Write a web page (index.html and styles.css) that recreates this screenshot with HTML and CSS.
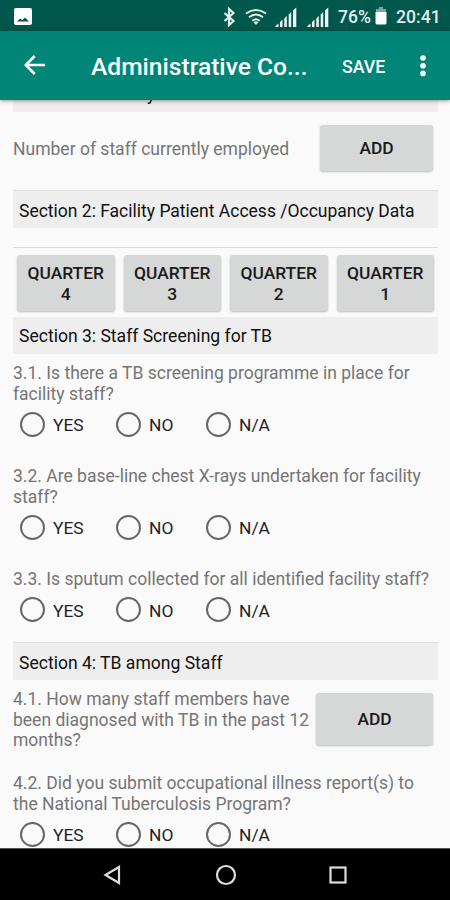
FILE: index.html
```html
<!DOCTYPE html>
<html lang="en">
<head>
<meta charset="utf-8">
<title>Administrative Controls</title>
<link rel="stylesheet" href="styles.css">
</head>
<body>
<div class="screen">
  <div class="status">
    <svg class="status-photo" width="18" height="18" viewBox="0 0 18 18"><rect width="18" height="17" rx="2" fill="#fff"/><path d="M3 13.500l3.200-3 2 1.800L11 9.500l4 4z" fill="#00574b"/></svg>
    <svg class="status-icons" width="112" height="24" viewBox="0 0 112 24" fill="none">
      <path d="M4.500 8l9 8L9 20V4l4.500 4-9 8" stroke="#e2eeec" stroke-width="2.200"/>
      <g stroke="#e2eeec" stroke-width="2"><path d="M26 8.500q10-7 20 0M29 12.200q7-5.500 14 0M32.300 15.700q3.700-3 7.400 0"/></g>
      <path d="M33.500 17l2.500 3 2.500-3q-2.500-1.500-5 0z" fill="#e2eeec"/>
      <g id="signal" fill="#f0f6f5"><path d="M55.500 22v-1l3-2.500V22zM60 22v-5l2.500-2.500V22zM64.300 22v-8.500l2.500-2.500v11zM68.700 22V9.500l2.500-2.500v15zM73 22V5.500L76.300 2.500V22z"/></g>
      <use href="#signal" x="32"/>
    </svg>
    <span class="status-text percent">76%</span>
    <svg class="battery" width="12" height="20" viewBox="0 0 12 20"><path d="M4 1h4v2h3v4H1V3h3z" fill="#7aa7a0"/><path d="M.5 6h11v11q0 1.500-1.500 1.500H2Q.5 18.500.5 17z" fill="#fff"/></svg>
    <span class="status-text clock">20:41</span>
  </div>
  <header class="appbar">
    <svg class="back" width="22" height="20" viewBox="0 0 22 20" fill="none" stroke="#fff" stroke-width="2.600"><path d="M21 10H2M10.700 1L1.800 10l8.900 9"/></svg>
    <h1 class="title">Administrative Co...</h1>
    <span class="save">SAVE</span>
    <svg class="more" width="6" height="22" viewBox="0 0 6 22" fill="#fff"><circle cx="3" cy="3" r="2.800"/><circle cx="3" cy="10.700" r="2.800"/><circle cx="3" cy="18.400" r="2.800"/></svg>
  </header>
  <main class="content">
    <h2 class="section first">Section 1: Facility Staff Details</h2>
    <div class="entry staff-count"><p class="question">Number of staff currently employed</p><button class="btn add">ADD</button></div>
    <h2 class="section second">Section 2: Facility Patient Access /Occupancy Data</h2>
    <div class="quarters">
      <button class="btn">QUARTER<br>4</button><button class="btn">QUARTER<br>3</button><button class="btn">QUARTER<br>2</button><button class="btn">QUARTER<br>1</button>
    </div>
    <h2 class="section third">Section 3: Staff Screening for TB</h2>
    <div class="item">
      <p class="question">3.1. Is there a TB screening programme in place for<br>facility staff?</p>
      <div class="radios"><label><i></i>YES</label><label><i></i>NO</label><label><i></i>N/A</label></div>
    </div>
    <div class="item">
      <p class="question">3.2. Are base-line chest X-rays undertaken for facility<br>staff?</p>
      <div class="radios"><label><i></i>YES</label><label><i></i>NO</label><label><i></i>N/A</label></div>
    </div>
    <div class="item short">
      <p class="question">3.3. Is sputum collected for all identified facility staff?</p>
      <div class="radios"><label><i></i>YES</label><label><i></i>NO</label><label><i></i>N/A</label></div>
    </div>
    <h2 class="section">Section 4: TB among Staff</h2>
    <div class="entry diagnosed"><p class="question">4.1. How many staff members have<br>been diagnosed with TB in the past 12<br>months?</p><button class="btn add">ADD</button></div>
    <div class="item">
      <p class="question">4.2. Did you submit occupational illness report(s) to<br>the National Tuberculosis Program?</p>
      <div class="radios"><label><i></i>YES</label><label><i></i>NO</label><label><i></i>N/A</label></div>
    </div>
  </main>
  <nav class="navbar">
    <svg width="20" height="20" viewBox="0 0 20 20"><path d="M16 2v16L2.500 10z"/></svg>
    <svg width="22" height="22" viewBox="0 0 22 22"><circle cx="11" cy="11" r="9"/></svg>
    <svg width="20" height="20" viewBox="0 0 20 20"><rect x="2.500" y="2.500" width="15" height="15"/></svg>
  </nav>
</div>
</body>
</html>
```

FILE: styles.css
```css
* { box-sizing: border-box; }
body { margin: 0; font-family: Roboto, sans-serif; background: #fafafa; }
h1, h2, p { margin: 0; font-weight: 400; }

.screen { width: 450px; height: 900px; display: flex; flex-direction: column; overflow: hidden; }

.status { flex: none; height: 31px; background: #00574b; display: flex; align-items: center; padding: 0 0 0 14px; }
.status-photo { margin-top: 2px; }
.status-icons { margin: 2px 0 0 188px; }
.status-text { color: #e2eeec; font-size: 17.600px; font-weight: 500; line-height: 20px; margin-top: 3px; white-space: nowrap; }
.percent { width: 33px; margin-left: 6px; }
.battery { margin: 1px 9px 0 4px; }
.clock { margin-left: 0; }

.appbar { flex: none; height: 69px; background: #008577; color: #fff; display: flex; align-items: center; padding: 3px 24px 0 24px; position: relative; z-index: 1; box-shadow: 0 1px 4px rgba(0, 0, 0, .4); }
.back { margin-top: -4px; }
.title { font-size: 24.600px; font-weight: 500; line-height: 30px; margin-left: 45px; width: 251px; white-space: nowrap; }
.save { font-size: 17.800px; font-weight: 500; line-height: 22px; width: 78px; white-space: nowrap; }
.more { margin-top: -3px; }

.content { flex: 1; min-height: 0; overflow: hidden; padding: 0 12px 0 13px; }
.section { height: 38px; background: #eee; border-top: 1px solid #dedede; padding-left: 6px; font-size: 17.560px; line-height: 40px; color: #111; white-space: nowrap; }
.section.first { margin-top: -26px; line-height: 38px; }
.section.second { font-size: 17.500px; }
.section.third { height: 37px; border-top-color: #eee; line-height: 37px; }

.question { font-size: 17.520px; line-height: 20.600px; color: #757575; white-space: nowrap; }
.entry { display: flex; justify-content: space-between; padding-right: 4px; }
.staff-count { height: 78px; align-items: center; padding-right: 5px; }
.staff-count .add { width: 113px; height: 46px; margin-top: -6px; }
.staff-count .question { margin-top: -4px; }
.diagnosed { height: 84px; padding-top: 9px; padding-right: 5px; }
.diagnosed .add { width: 117px; height: 52px; margin-top: 4px; }

.btn { border: 0; border-radius: 3px; background: #d6d8d7; color: #1a1a1a; font: 500 17.400px/20.600px Roboto, sans-serif; padding: 0; box-shadow: 0 1px 2px rgba(0, 0, 0, .25); }
.quarters { margin-top: 19px; border-top: 1px solid #dcdcdc; height: 70px; padding: 7px 4px 6px; display: grid; grid-template-columns: repeat(4, 1fr); gap: 9px; }
.quarters .btn { padding-top: 1px; }

.item { height: 103px; padding-top: 9px; }
.item.short { height: 82px; }
.radios { display: flex; height: 42px; align-items: center; padding-left: 7px; }
.radios label { display: flex; align-items: center; font-size: 17.400px; color: #222; white-space: nowrap; }
.radios label:first-child { width: 96px; }
.radios label:nth-child(2) { width: 90px; }
.radios i { width: 25px; height: 25px; border: 2px solid #666; border-radius: 50%; margin: -2px 8px 0 0; flex: none; }

.navbar { flex: none; height: 52px; background: #000; border-top: 1px solid #555; display: flex; justify-content: space-between; align-items: center; padding: 0 102px 0 103px; }
.navbar svg { fill: none; stroke: #ddd; stroke-width: 2.200; }
```
